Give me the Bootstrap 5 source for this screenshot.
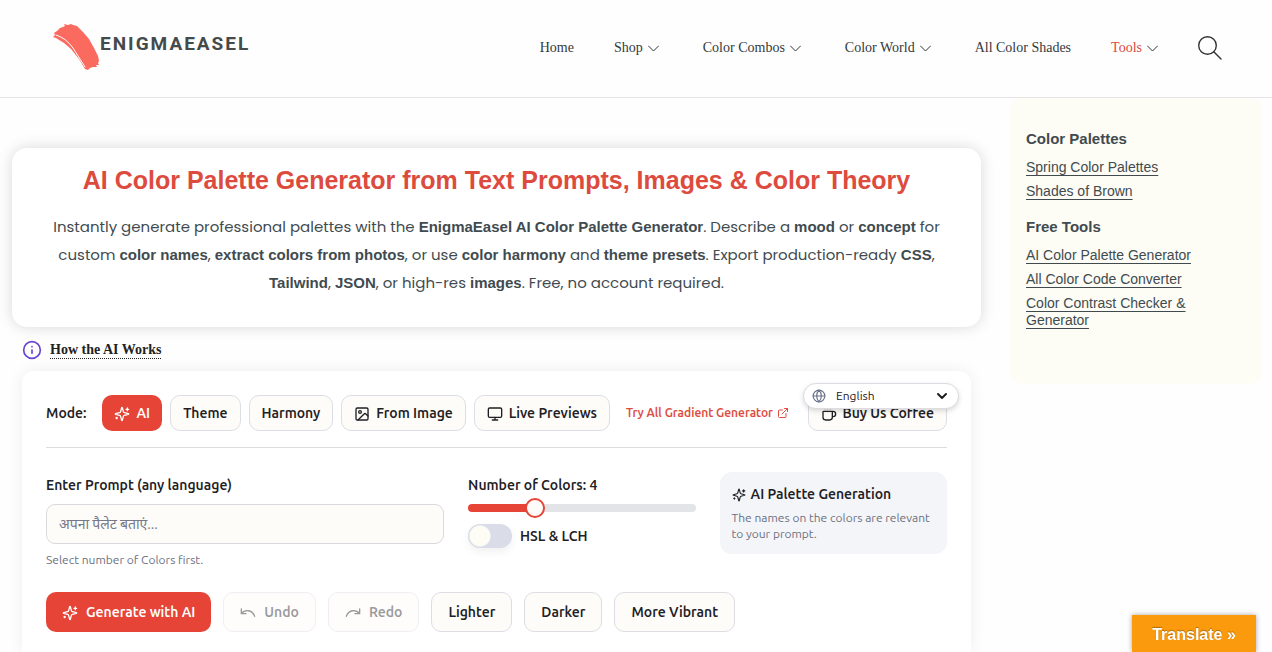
<!DOCTYPE html>
<html lang="en">
<head>
<meta charset="utf-8">
<meta name="viewport" content="width=device-width, initial-scale=1">
<title>AI Color Palette Generator</title>
<link href="https://cdn.jsdelivr.net/npm/bootstrap@5.3.0/dist/css/bootstrap.min.css" rel="stylesheet">
<style>
:root{--accent:#e54436;--ink:#1f2024;--slate:#414b4f;--line:#dddde5;--cream:#fdfcf8;--soft:#6b7080}
body{font-family:"Ubuntu Sans",Ubuntu,"Noto Sans",sans-serif;font-size:14px;line-height:20px;color:var(--ink);background:#fefefe;overflow-x:hidden}
svg{flex:none;fill:none;stroke:currentColor;stroke-width:2;stroke-linecap:round;stroke-linejoin:round}
.site-head{border-bottom:1px solid #e5e5e5;padding:0 50px 2px 53px;height:98px}
.brand-name{font:700 19px/24px Roboto,sans-serif;letter-spacing:2px;color:#454a4a;margin:0 0 8px -1px}
.site-nav{font:14px/20px "Liberation Serif",serif;gap:40px}
.site-nav a{color:#333a3d;text-decoration:none}
.site-nav a.has-menu{margin-right:4px}
.site-nav a.current{color:#dd4b3e}
.site-nav a svg{width:11px;height:11px;stroke-width:1;margin-left:5px;color:#333}
.page-grid{display:grid;grid-template-columns:minmax(0,1fr) 252px;column-gap:29px;padding:0 10px 0 12px;align-items:start}
.intro{margin-top:50px;padding:16px 32px 30px;border-radius:15px;background:#fff;box-shadow:0 0 15px rgba(0,0,0,.15);text-align:center}
.intro h1{font:700 25px/32px "Liberation Sans",sans-serif;color:#dd4b3e;margin:0 0 17px}
.intro p{font:15px/28px Poppins,Inter,sans-serif;color:var(--slate);margin:0}
.intro strong{font-family:"Liberation Sans",sans-serif}
.how{gap:8px;padding:13px 10px 11px;line-height:20px}
.how a{font:700 14px/17px "Liberation Serif",serif;color:#222;text-decoration:none;border-bottom:1px dotted #222}
.tool{margin:0 10px;padding:24px 24px 20px;border-radius:12px 12px 0 0;background:#fff;box-shadow:0 0 16px rgba(0,0,0,.07);position:relative}
.modes{gap:8px;padding-bottom:16px;border-bottom:1px solid #dcdce0;margin-bottom:24px}
.strong{font-weight:600}
.modes .strong{padding-top:2px}
.pill{display:inline-flex;align-items:center;justify-content:center;gap:6px;height:36px;padding:2px 12px 0;border:1px solid var(--line);border-radius:10px;background:var(--cream);color:var(--ink);font-weight:600;font-size:14px;white-space:nowrap;line-height:20px}
.pill svg{width:16px;height:16px}
.pill.on{background:var(--accent);border:0;color:#fff}
.pill:disabled{opacity:.45}
.pill.tall{height:40px;padding:2px 16px 0;gap:8px}
.try{font-size:12px;font-weight:600;color:#dd4b3e;text-decoration:none;gap:4px;margin:0 8px;white-space:nowrap}
.try svg{width:12px;height:12px}
.lang{position:absolute;top:12px;right:12px;width:156px;height:26px;padding:0 11px 0 8px;gap:8px;border:1px solid #dcdce2;border-radius:13px;background:#fff;box-shadow:0 2px 5px rgba(0,0,0,.15)}
.lang select{appearance:none;border:0;background:none;font-size:12px;line-height:20px;padding:0 0 0 2px;color:var(--ink);flex:1;min-width:0;outline:0}
.fields{display:grid;grid-template-columns:7fr 4fr 4fr;gap:24px;align-items:start}
.fields label{display:block;line-height:20px;font-weight:600;padding-top:2px}
.fields .head-label{padding-top:4px}
.prompt{display:block;width:100%;height:40px;margin:8px 0;padding:0 12px;border:1px solid #dadade;border-radius:9px;background:var(--cream);font-size:14px}
.prompt::placeholder{color:#74788a}
.fine{font-size:12px;line-height:16px;color:var(--soft)}
.count{appearance:none;display:block;width:100%;height:8px;margin:8px 0 12px;border-radius:4px;background:linear-gradient(90deg,var(--accent) 29%,#e3e4e8 29%)}
.count::-webkit-slider-thumb{appearance:none;width:20px;height:20px;border:2px solid var(--accent);border-radius:50%;background:var(--cream)}
.toggle{appearance:none;width:44px;height:24px;margin:0;border-radius:12px;background:radial-gradient(circle at 12px 12px,#fdfdf5 10px,transparent 11px),#dadce7;box-shadow:0 4px 8px rgba(0,0,0,.06)}
.note{padding:13px 12px 12px;border-radius:12px;background:#f4f5f8}
.note-title{gap:5px;margin-bottom:5px}
.actions{gap:12px;margin-top:24px}
.side{padding:31px 16px 48px;border-radius:12px;background:#fdfcf5;font-family:"Liberation Sans",sans-serif;color:var(--slate)}
.side h2{font-size:15px;line-height:20px;font-weight:700;margin:0 0 10px}
.side ul{list-style:none;margin:0 0 17px;padding:0}
.side li{line-height:17px;margin-bottom:7px}
.side a{color:var(--slate);text-decoration:underline;text-underline-offset:3px}
.translate{position:fixed;right:16px;bottom:0;width:124px;height:37px;border:0;background:#fa9a0c;color:#fff;font:700 16px/20px "Liberation Sans",sans-serif;padding-top:3px;box-shadow:0 0 5px rgba(0,0,0,.35);text-shadow:0 -1px 1px rgba(0,0,0,.3)}
</style>
</head>
<body>
<svg width="0" height="0" class="position-absolute" aria-hidden="true">
<symbol id="spark" viewBox="0 0 24 24"><path d="M9.94 15.5A2 2 0 0 0 8.5 14.06l-6.14-1.58a.5.5 0 0 1 0-.96L8.5 9.94A2 2 0 0 0 9.94 8.5l1.58-6.14a.5.5 0 0 1 .96 0l1.58 6.14a2 2 0 0 0 1.44 1.44l6.14 1.58a.5.5 0 0 1 0 .96l-6.14 1.58a2 2 0 0 0-1.44 1.44l-1.58 6.14a.5.5 0 0 1-.96 0zM20 3v4M22 5h-4M4 17v2M5 18H3"/></symbol>
<symbol id="down" viewBox="0 0 11 11"><path d="M.5 3l5 5 5-5"/></symbol>
</svg>
<header class="site-head d-flex align-items-center justify-content-between">
  <a href="#" class="d-flex align-items-center text-decoration-none">
    <svg width="48" height="52" viewBox="0 0 48 52"><path fill="#fb6a5f" stroke="none" d="M1 11l3-2 3-3 3-1 2-1-1-2 4 1 3-1 2 1 4 1 6 6 6 7 5 9 4 8 1 5-1 2 1 2-3 0 1 2-4 0-3 1-2 2-3-1-6-10-8-10-7-6-8-5-3-1 2-2z"/><path stroke="#fff" stroke-width="1" d="M3 13q10 3 17 13l12 19"/></svg>
    <span class="brand-name">ENIGMAEASEL</span>
  </a>
  <nav class="site-nav d-flex align-items-center">
    <a href="#">Home</a>
    <a href="#" class="has-menu">Shop<svg><use href="#down"/></svg></a>
    <a href="#" class="has-menu">Color Combos<svg><use href="#down"/></svg></a>
    <a href="#" class="has-menu">Color World<svg><use href="#down"/></svg></a>
    <a href="#">All Color Shades</a>
    <a href="#" class="current">Tools<svg><use href="#down"/></svg></a>
    <button class="btn p-0 border-0 d-flex" aria-label="Search"><svg width="24" height="24" viewBox="0 0 24 24" color="#333"><g stroke-width="1.4"><circle cx="9.500" cy="9.500" r="8.800"/><path d="M16 16l7 7"/></g></svg></button>
  </nav>
</header>
<div class="page-grid">
  <main>
    <section class="intro">
      <h1>AI Color Palette Generator from Text Prompts, Images &amp; Color Theory</h1>
      <p>Instantly generate professional palettes with the <strong>EnigmaEasel AI Color Palette Generator</strong>. Describe a <strong>mood</strong> or <strong>concept</strong> for custom <strong>color names</strong>, <strong>extract colors from photos</strong>, or use <strong>color harmony</strong> and <strong>theme presets</strong>. Export production-ready <strong>CSS</strong>, <strong>Tailwind</strong>, <strong>JSON</strong>, or high-res <strong>images</strong>. Free, no account required.</p>
    </section>
    <div class="how d-flex align-items-center">
      <svg width="20" height="20" viewBox="0 0 24 24" color="#6a45d2"><circle cx="12" cy="12" r="10"/><path d="M12 16v-4M12 8h.01"/></svg>
      <a href="#">How the AI Works</a>
    </div>
    <section class="tool">
      <div class="modes d-flex align-items-center">
        <span class="strong me-2">Mode:</span>
        <button class="pill on"><svg><use href="#spark"/></svg>AI</button>
        <button class="pill">Theme</button>
        <button class="pill">Harmony</button>
        <button class="pill"><svg viewBox="0 0 24 24"><rect x="3" y="3" width="18" height="18" rx="2"/><circle cx="9" cy="9" r="2"/><path d="M21 15l-3.100-3.100a2 2 0 0 0-2.800 0L6 21"/></svg>From Image</button>
        <button class="pill"><svg viewBox="0 0 24 24"><rect x="2" y="3" width="20" height="14" rx="2"/><path d="M8 21h8M12 17v4"/></svg>Live Previews</button>
        <a href="#" class="try d-flex align-items-center">Try All Gradient Generator<svg viewBox="0 0 24 24"><path d="M15 3h6v6M10 14L21 3M18 13v6a2 2 0 0 1-2 2H5a2 2 0 0 1-2-2V8a2 2 0 0 1 2-2h6"/></svg></a>
        <button class="pill ms-auto"><svg viewBox="0 0 24 24"><path d="M10 2v2M14 2v2M6 2v2M16 8a1 1 0 0 1 1 1v8a4 4 0 0 1-4 4H7a4 4 0 0 1-4-4V9a1 1 0 0 1 1-1h14a4 4 0 1 1 0 8h-1"/></svg>Buy Us Coffee</button>
      </div>
      <div class="lang d-flex align-items-center">
        <svg width="14" height="14" viewBox="0 0 24 24" color="#69728a"><circle cx="12" cy="12" r="10"/><path d="M12 2a14.500 14.500 0 0 0 0 20 14.500 14.500 0 0 0 0-20M2 12h20"/></svg>
        <select aria-label="Language"><option>English</option></select>
        <svg width="10" height="10" viewBox="0 0 10 10"><path d="M1 3l4 4 4-4"/></svg>
      </div>
      <div class="fields">
        <div>
          <label for="prompt" class="head-label">Enter Prompt (any language)</label>
          <input id="prompt" class="prompt" type="text" placeholder="अपना पैलेट बताएं...">
          <div class="fine">Select number of Colors first.</div>
        </div>
        <div>
          <label for="count" class="head-label">Number of Colors: 4</label>
          <input id="count" class="count" type="range" min="1" max="12" value="4">
          <div class="d-flex align-items-center gap-2"><input id="hsl" class="toggle" type="checkbox" role="switch"><label for="hsl">HSL &amp; LCH</label></div>
        </div>
        <aside class="note">
          <div class="strong note-title d-flex align-items-center"><svg width="14" height="14"><use href="#spark"/></svg>AI Palette Generation</div>
          <div class="fine">The names on the colors are relevant to your prompt.</div>
        </aside>
      </div>
      <div class="actions d-flex flex-wrap">
        <button class="pill tall on"><svg><use href="#spark"/></svg>Generate with AI</button>
        <button class="pill tall" disabled><svg viewBox="0 0 24 24"><path d="M2 6v7h7M2 13c5-6 16-7 20 4"/></svg>Undo</button>
        <button class="pill tall" disabled><svg viewBox="0 0 24 24"><path d="M22 6v7h-7M22 13c-5-6-16-7-20 4"/></svg>Redo</button>
        <button class="pill tall">Lighter</button>
        <button class="pill tall">Darker</button>
        <button class="pill tall">More Vibrant</button>
      </div>
    </section>
  </main>
  <aside class="side">
    <h2>Color Palettes</h2>
    <ul><li><a href="#">Spring Color Palettes</a></li><li><a href="#">Shades of Brown</a></li></ul>
    <h2>Free Tools</h2>
    <ul class="mb-0"><li><a href="#">AI Color Palette Generator</a></li><li><a href="#">All Color Code Converter</a></li><li><a href="#">Color Contrast Checker &amp; Generator</a></li></ul>
  </aside>
</div>
<button class="translate">Translate »</button>
<script src="https://cdn.jsdelivr.net/npm/bootstrap@5.3.0/dist/js/bootstrap.bundle.min.js"></script>
</body>
</html>
